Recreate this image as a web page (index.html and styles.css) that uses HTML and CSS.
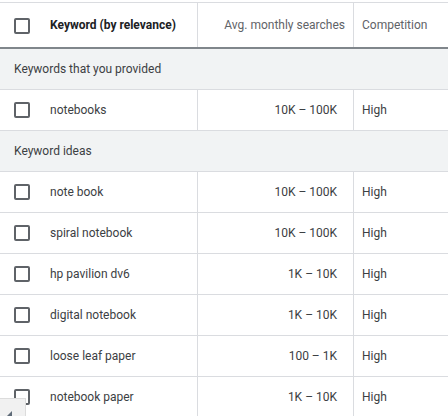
FILE: index.html
```html
<!DOCTYPE html>
<html>
<head>
<meta charset="utf-8">
<link rel="stylesheet" href="styles.css">
</head>
<body>
<div class="table">
  <div class="row head">
    <div class="cell kw"><span class="cb"></span><span class="kw-title">Keyword (by relevance)</span></div>
    <div class="cell num"><span class="head-num">Avg. monthly searches</span></div>
    <div class="cell comp">Competition</div>
  </div>
  <div class="group">Keywords that you provided</div>
  <div class="row">
    <div class="cell kw"><span class="cb"></span><span>notebooks</span></div>
    <div class="cell num">10K – 100K</div>
    <div class="cell comp">High</div>
  </div>
  <div class="group">Keyword ideas</div>
  <div class="row">
    <div class="cell kw"><span class="cb"></span><span>note book</span></div>
    <div class="cell num">10K – 100K</div>
    <div class="cell comp">High</div>
  </div>
  <div class="row">
    <div class="cell kw"><span class="cb"></span><span>spiral notebook</span></div>
    <div class="cell num">10K – 100K</div>
    <div class="cell comp">High</div>
  </div>
  <div class="row">
    <div class="cell kw"><span class="cb"></span><span>hp pavilion dv6</span></div>
    <div class="cell num">1K – 10K</div>
    <div class="cell comp">High</div>
  </div>
  <div class="row">
    <div class="cell kw"><span class="cb"></span><span>digital notebook</span></div>
    <div class="cell num">1K – 10K</div>
    <div class="cell comp">High</div>
  </div>
  <div class="row">
    <div class="cell kw"><span class="cb"></span><span>loose leaf paper</span></div>
    <div class="cell num">100 – 1K</div>
    <div class="cell comp">High</div>
  </div>
  <div class="row">
    <div class="cell kw"><span class="cb"></span><span>notebook paper</span></div>
    <div class="cell num">1K – 10K</div>
    <div class="cell comp">High</div>
  </div>
</div>
<div class="scroll-corner">
  <svg width="26" height="18" viewBox="0 0 26 18"><polygon points="6,18 12,12 12,24" fill="#5f6b78"/></svg>
</div>
</body>
</html>
```

FILE: styles.css
```css
html, body {
  margin: 0;
  padding: 0;
  background: #fff;
  overflow: hidden;
}
body {
  font-family: Roboto, "Liberation Sans", Arial, sans-serif;
  font-size: 12px;
  color: #3c4043;
  width: 448px;
  height: 416px;
  position: relative;
}
.table {
  margin-top: 2px;
  width: 448px;
  border-top: 1px solid #dadce0;
}
.row {
  display: flex;
  height: 40px;
  border-bottom: 1px solid #dadce0;
}
.row.head {
  height: 44px;
  border-bottom: 2px solid #80868b;
}
.cell {
  display: flex;
  align-items: center;
  box-sizing: border-box;
}
.kw {
  width: 198px;
  border-right: 1px solid #dadce0;
  padding-left: 14px;
}
.num {
  width: 156px;
  border-right: 1px solid #dadce0;
  justify-content: flex-end;
  padding-right: 16px;
}
.comp {
  flex: 1;
  padding-left: 8px;
}
.head .comp, .head-num {
  color: #5f6368;
}
.head .num {
  padding-right: 8px;
}
.cb {
  width: 16px;
  height: 16px;
  box-sizing: border-box;
  border: 2px solid #5f6368;
  border-radius: 2px;
  margin-right: 20px;
  flex: none;
}
.head .cb {
  margin-top: 1px;
}
.kw-title {
  font-weight: bold;
  color: #202124;
}
.group {
  height: 40px;
  display: flex;
  align-items: center;
  padding-left: 14px;
  background: #f1f3f4;
  border-bottom: 1px solid #dadce0;
}
.scroll-corner {
  position: absolute;
  left: 0;
  top: 398px;
  width: 26px;
  height: 18px;
  box-sizing: border-box;
  background: #f1f1f1;
  border-top: 1px solid #dcdcdc;
  border-right: 1px solid #dcdcdc;
}
.scroll-corner svg {
  display: block;
}
```
